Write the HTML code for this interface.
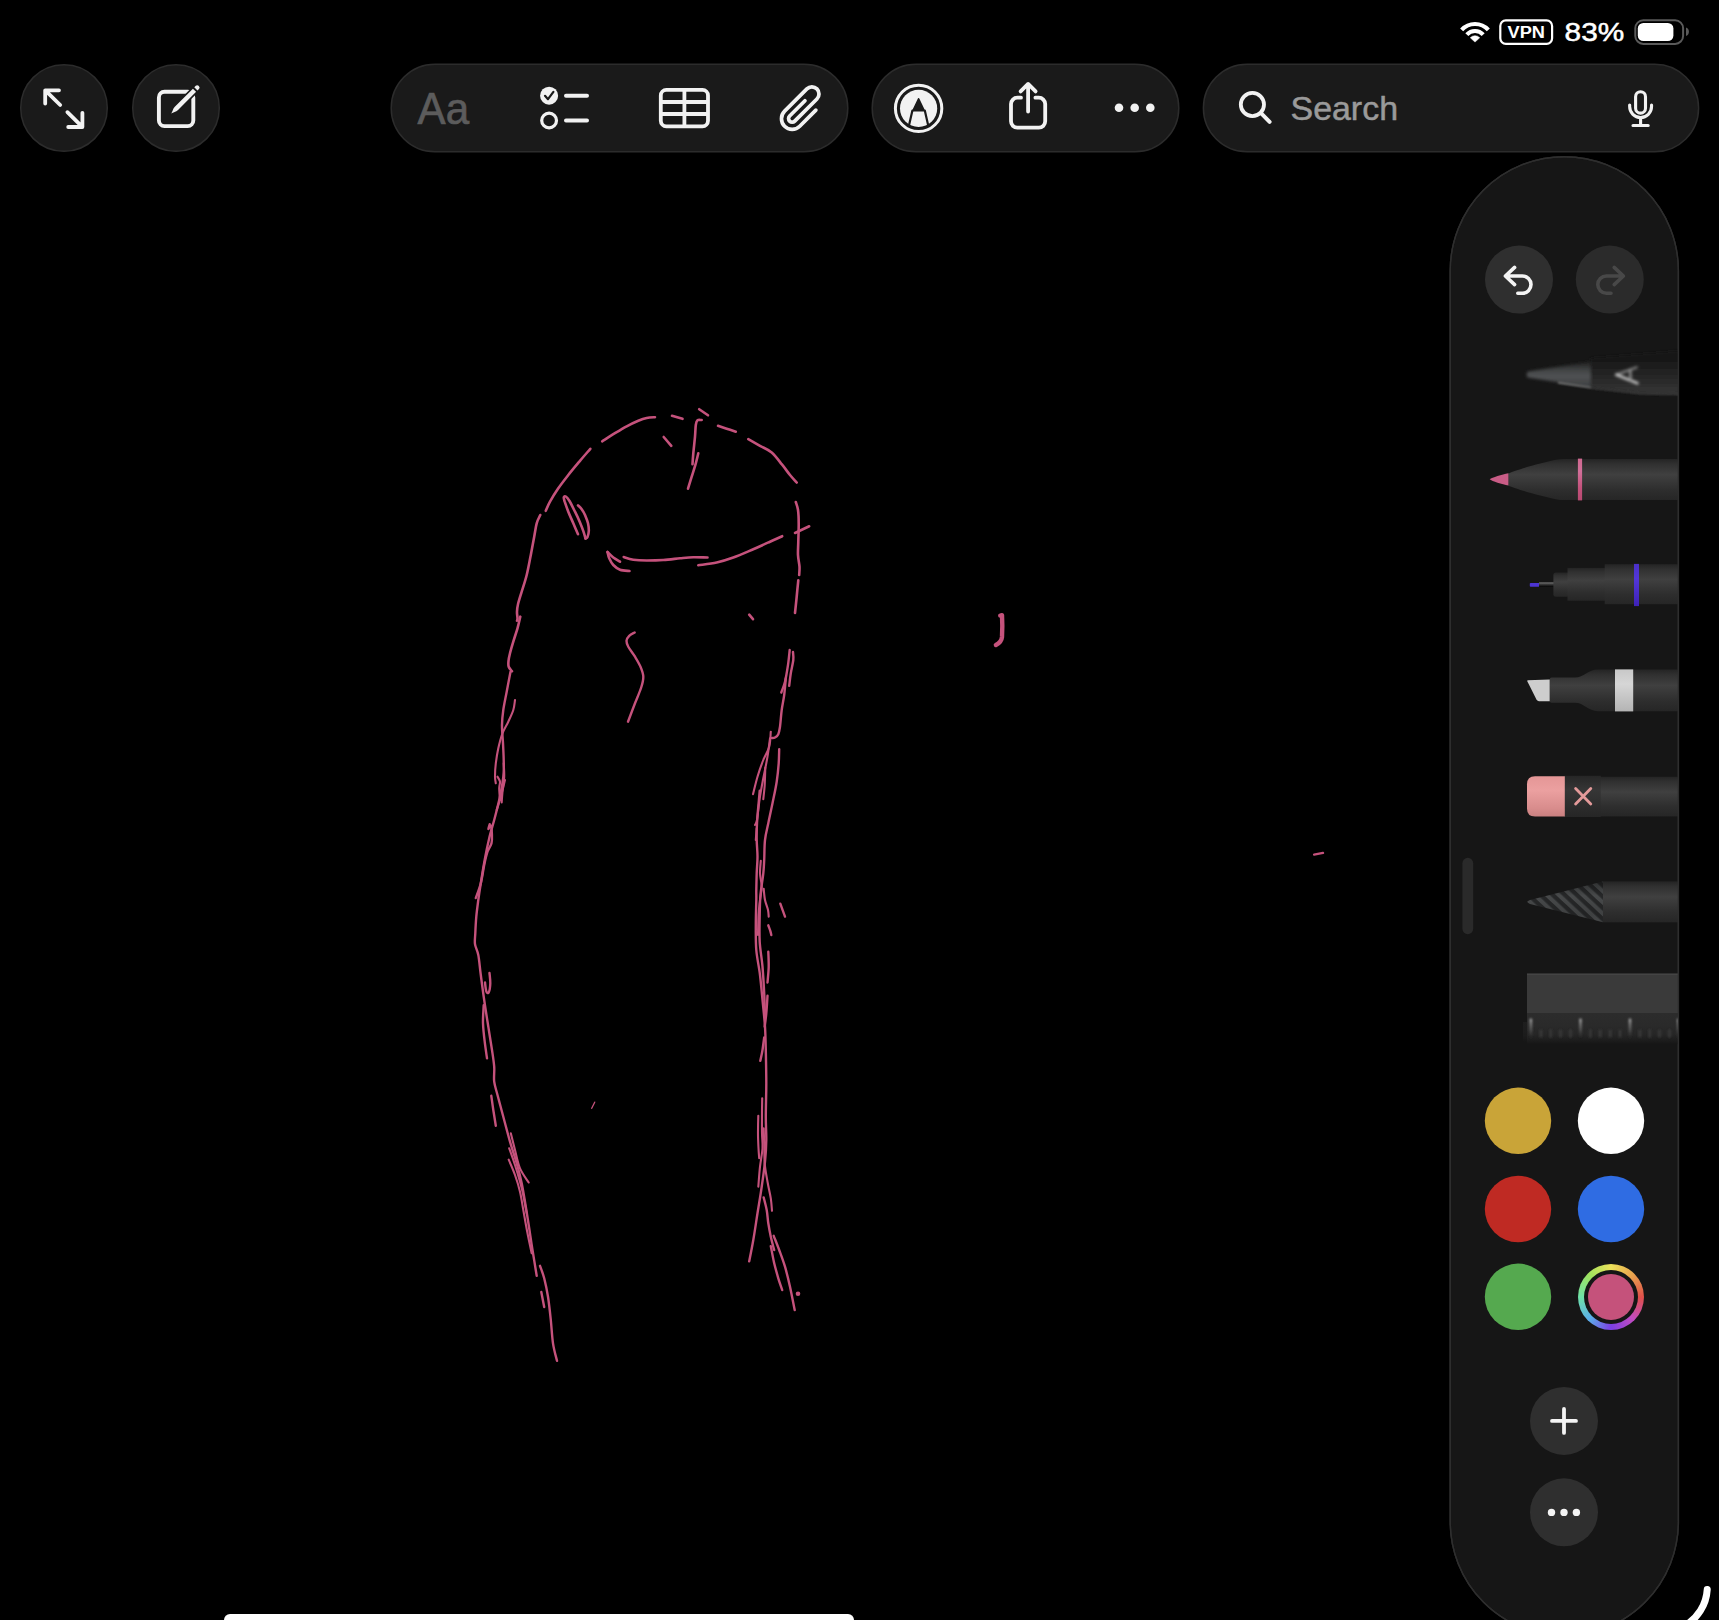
<!DOCTYPE html>
<html><head><meta charset="utf-8">
<style>
html,body{margin:0;padding:0;background:#000;}
body{width:1719px;height:1620px;overflow:hidden;position:relative;font-family:"Liberation Sans",sans-serif;}
svg{position:absolute;left:0;top:0;}
text{font-family:"Liberation Sans",sans-serif;}
#ring{position:absolute;left:1577.8px;top:1263.6px;width:66.4px;height:66.4px;border-radius:50%;
background:conic-gradient(from 0deg,#ece25a 0deg,#e9a24e 45deg,#e0504a 90deg,#c24cc0 135deg,#7c3fe4 180deg,#5bb0ea 225deg,#6fe2a8 270deg,#9ee25e 315deg,#ece25a 360deg);}
#ring:before{content:"";position:absolute;left:6.2px;top:6.2px;right:6.2px;bottom:6.2px;border-radius:50%;background:#161616;}
#ring:after{content:"";position:absolute;left:10px;top:10px;right:10px;bottom:10px;border-radius:50%;background:#c5527b;}
</style></head><body>
<svg width="1719" height="1620" viewBox="0 0 1719 1620">
<defs>
<linearGradient id="body" x1="0" y1="0" x2="0" y2="1">
<stop offset="0" stop-color="#242424"/><stop offset="0.12" stop-color="#303030"/><stop offset="0.38" stop-color="#404040"/><stop offset="0.75" stop-color="#2e2e2e"/><stop offset="1" stop-color="#262626"/>
</linearGradient>
<clipPath id="panelclip"><rect x="1450" y="156.5" width="228.5" height="1479.2" rx="114" ry="114"/></clipPath>
</defs>
<!--TOOLBAR-->
<g id="toolbar">
<!-- circle buttons -->
<circle cx="64" cy="108" r="43.3" fill="#1a1a1a" stroke="#2c2c2c" stroke-width="1.5"/>
<circle cx="176" cy="108" r="43.3" fill="#1a1a1a" stroke="#2c2c2c" stroke-width="1.5"/>
<!-- expand arrows -->
<g fill="none" stroke="#f2f2f2" stroke-width="3.8" stroke-linecap="round" stroke-linejoin="round">
<path d="M45.2 103.5 V90.3 H59 M45.8 90.9 L60.2 105"/>
<path d="M82.4 112.8 V127 H68.2 M81.8 126.4 L67.4 112.2"/>
</g>
<!-- compose -->
<rect x="158.9" y="91.8" width="34.4" height="34.3" rx="5.6" fill="none" stroke="#f2f2f2" stroke-width="3.9"/>
<g transform="translate(171.2 113.6) rotate(-45)" fill="#f2f2f2" stroke="#1a1a1a" stroke-width="3.2" paint-order="stroke" stroke-linejoin="round">
<path d="M0 0 C2.4 -0.5 4.6 -2.25 7.4 -2.25 L33 -2.25 L33 2.25 L7.4 2.25 C4.6 2.25 2.4 0.5 0 0 Z"/>
<path d="M34.9 -2.25 H37 a2 2 0 0 1 2 2 V0.25 a2 2 0 0 1 -2 2 H34.9 Z"/>
</g>
<!-- pill 1 -->
<rect x="391.2" y="64.2" width="456.6" height="87.6" rx="43.8" fill="#1a1a1a" stroke="#2c2c2c" stroke-width="1.5"/>
<text x="417.6" y="123.6" font-size="44" fill="#5c5c5c" stroke="#5c5c5c" stroke-width="0.7" textLength="51.5" lengthAdjust="spacingAndGlyphs">Aa</text>
<!-- checklist -->
<circle cx="549.1" cy="95.7" r="9" fill="#f2f2f2"/>
<path d="M545 95.8 L548 99.2 L553.4 91.8" fill="none" stroke="#1a1a1a" stroke-width="2.2" stroke-linecap="round" stroke-linejoin="round"/>
<circle cx="549.1" cy="120.5" r="7.4" fill="none" stroke="#f2f2f2" stroke-width="3.2"/>
<path d="M566 95.8 H587 M566 120.6 H587" stroke="#f2f2f2" stroke-width="4" stroke-linecap="round"/>
<!-- table -->
<g fill="none" stroke="#f2f2f2" stroke-width="3.8">
<rect x="660.8" y="89.9" width="47.2" height="36.4" rx="5.5"/>
<path d="M684.4 90 V126 M661 102 H708 M661 114 H708"/>
</g>
<!-- paperclip -->
<g transform="matrix(0.7071 -0.7071 0.7071 0.7071 783.33 112.44)">
<path d="M23.6 7 H1.9 A3.6 3.6 0 0 0 1.9 14.2 H33.3 A7.1 7.1 0 0 0 33.3 0 H1.8 A10.7 10.7 0 0 0 1.8 21.4 H24.6" fill="none" stroke="#f2f2f2" stroke-width="3.7" stroke-linecap="round" stroke-linejoin="round"/>
</g>
<!-- pill 2 -->
<rect x="872.2" y="64.2" width="306.6" height="87.6" rx="43.8" fill="#1a1a1a" stroke="#2c2c2c" stroke-width="1.5"/>
<!-- markup -->
<circle cx="918.6" cy="108.4" r="23.2" fill="none" stroke="#f2f2f2" stroke-width="3"/>
<circle cx="918.6" cy="108.4" r="18.6" fill="#f2f2f2"/>
<path d="M918.6 98.8 L913 110.6 H924.2 Z" fill="#1a1a1a" stroke="#1a1a1a" stroke-width="1.6" stroke-linejoin="round"/>
<path d="M912.4 110.5 L909.2 124.5 M924.8 110.5 L928 124.5" stroke="#1a1a1a" stroke-width="2.2" stroke-linecap="round"/>
<!-- share -->
<g fill="none" stroke="#f2f2f2" stroke-width="3.8" stroke-linecap="round" stroke-linejoin="round">
<path d="M1021 97.7 H1017.4 a6.4 6.4 0 0 0 -6.4 6.4 V121.3 a6.4 6.4 0 0 0 6.4 6.4 H1038.8 a6.4 6.4 0 0 0 6.4 -6.4 V104.1 a6.4 6.4 0 0 0 -6.4 -6.4 H1035.4"/>
<path d="M1028.1 84.4 V111.5 M1020.6 91.4 L1028.1 83.9 L1035.6 91.4"/>
</g>
<!-- dots -->
<circle cx="1119" cy="107.8" r="4.3" fill="#f2f2f2"/><circle cx="1134.7" cy="107.8" r="4.3" fill="#f2f2f2"/><circle cx="1150.3" cy="107.8" r="4.3" fill="#f2f2f2"/>
<!-- search pill -->
<rect x="1203.4" y="64.2" width="495.2" height="87.6" rx="43.8" fill="#1a1a1a" stroke="#2c2c2c" stroke-width="1.5"/>
<circle cx="1252.4" cy="104.5" r="11.6" fill="none" stroke="#f2f2f2" stroke-width="3.8"/>
<path d="M1261 113.2 L1269.6 121.8" stroke="#f2f2f2" stroke-width="4" stroke-linecap="round"/>
<text x="1290.5" y="119.7" font-size="34" fill="#9a9a9a" stroke="#9a9a9a" stroke-width="0.5" textLength="107.5" lengthAdjust="spacingAndGlyphs">Search</text>
<!-- mic -->
<rect x="1635.6" y="91.75" width="9.9" height="21.4" rx="4.95" fill="none" stroke="#f2f2f2" stroke-width="3.1"/>
<path d="M1629.65 105 v1.6 a10.95 10.95 0 0 0 21.9 0 v-1.6 M1640.6 118 V125 M1633 125.5 H1648.2" fill="none" stroke="#f2f2f2" stroke-width="3.1" stroke-linecap="round"/>
</g>
<!--STATUS-->
<g id="status">
<!-- wifi -->
<g fill="none" stroke="#fff" stroke-linecap="butt">
<path d="M1461.66 29.86 A18.1 18.1 0 0 1 1488.34 29.86" stroke-width="4.15"/>
<path d="M1466.82 34.6 A11.1 11.1 0 0 1 1483.18 34.6" stroke-width="4.07"/>
</g>
<path d="M1475 42.1 L1470.28 37.77 A6.4 6.4 0 0 1 1479.72 37.77 Z" fill="#fff" stroke="#fff" stroke-width="0.5" stroke-linejoin="round"/>
<!-- VPN -->
<rect x="1500.3" y="20.4" width="51.8" height="23.4" rx="5.5" fill="none" stroke="#fff" stroke-width="2.2"/>
<text x="1507.6" y="38.4" font-size="17.4" font-weight="bold" fill="#fff" textLength="37.4" lengthAdjust="spacingAndGlyphs">VPN</text>
<text x="1564.6" y="41" font-size="26" fill="#fff" stroke="#fff" stroke-width="0.5" textLength="59.6" lengthAdjust="spacingAndGlyphs">83%</text>
<!-- battery -->
<rect x="1635.3" y="20.3" width="47.8" height="23.6" rx="8" fill="none" stroke="#5a5a5a" stroke-width="2"/>
<rect x="1637.8" y="22.9" width="35.6" height="18.2" rx="5.6" fill="#fff"/>
<path d="M1686 27.6 c2.3 0.8 2.9 2.6 2.9 4.2 s-0.6 3.4 -2.9 4.2 Z" fill="#5a5a5a"/>
</g>
<!--PANEL-->
<g id="panel">
<defs>
<filter id="b1" x="-20%" y="-50%" width="140%" height="200%"><feGaussianBlur stdDeviation="1.1"/></filter>
<filter id="b3" filterUnits="userSpaceOnUse" x="1500" y="1000" width="200" height="60"><feGaussianBlur stdDeviation="0.9"/></filter>
<filter id="bA" filterUnits="userSpaceOnUse" x="1500" y="340" width="200" height="70"><feGaussianBlur stdDeviation="1.5"/></filter>
<filter id="b2" x="-20%" y="-50%" width="140%" height="200%"><feGaussianBlur stdDeviation="1.6"/></filter>
<linearGradient id="fadeTop" x1="0" y1="0" x2="0" y2="1"><stop offset="0" stop-color="#161616" stop-opacity="1"/><stop offset="0.45" stop-color="#161616" stop-opacity="0.55"/><stop offset="1" stop-color="#161616" stop-opacity="0"/></linearGradient>
<linearGradient id="pencilA" x1="0" y1="0" x2="0" y2="1"><stop offset="0" stop-color="#161616"/><stop offset="0.25" stop-color="#181818"/><stop offset="0.55" stop-color="#242424"/><stop offset="0.85" stop-color="#303030"/><stop offset="1" stop-color="#363636"/></linearGradient>
<linearGradient id="tipA" x1="0" y1="0" x2="0" y2="1"><stop offset="0" stop-color="#1c1c1c"/><stop offset="0.3" stop-color="#3e4041"/><stop offset="0.55" stop-color="#505254"/><stop offset="1" stop-color="#3c3e40"/></linearGradient>
<linearGradient id="pinkband" x1="0" y1="0" x2="0" y2="1"><stop offset="0" stop-color="#cf6890"/><stop offset="0.3" stop-color="#d2709a"/><stop offset="0.7" stop-color="#c4527c"/><stop offset="1" stop-color="#b84a72"/></linearGradient>
<linearGradient id="blueband" x1="0" y1="0" x2="0" y2="1"><stop offset="0" stop-color="#4a30c8"/><stop offset="0.35" stop-color="#5236d8"/><stop offset="1" stop-color="#3e22b8"/></linearGradient>
<linearGradient id="whiteband" x1="0" y1="0" x2="0" y2="1"><stop offset="0" stop-color="#c8c8c8"/><stop offset="0.35" stop-color="#d6d6d6"/><stop offset="1" stop-color="#b4b4b4"/></linearGradient>
<linearGradient id="eraser" x1="0" y1="0" x2="0" y2="1"><stop offset="0" stop-color="#e49696"/><stop offset="0.35" stop-color="#eba0a0"/><stop offset="0.8" stop-color="#d88c8c"/><stop offset="1" stop-color="#c98080"/></linearGradient>
<linearGradient id="ferrule" x1="0" y1="0" x2="0" y2="1"><stop offset="0" stop-color="#262626"/><stop offset="0.35" stop-color="#363636"/><stop offset="1" stop-color="#262626"/></linearGradient>
<linearGradient id="needle" x1="0" y1="0" x2="0" y2="1"><stop offset="0" stop-color="#7a7a7a"/><stop offset="0.5" stop-color="#333"/><stop offset="1" stop-color="#050505"/></linearGradient>
<linearGradient id="rulerfade" x1="0" y1="0" x2="0" y2="1"><stop offset="0" stop-color="#2c2c2c"/><stop offset="0.4" stop-color="#2a2a2a"/><stop offset="0.68" stop-color="#262626"/><stop offset="0.85" stop-color="#1e1e1e"/><stop offset="1" stop-color="#161616"/></linearGradient>
<linearGradient id="tick" x1="0" y1="0" x2="0" y2="1"><stop offset="0" stop-color="#b0b0b0"/><stop offset="0.25" stop-color="#7a7a7a"/><stop offset="0.6" stop-color="#4a4a4a"/><stop offset="1" stop-color="#2a2a2a" stop-opacity="0"/></linearGradient>
<pattern id="hatch" width="8.2" height="8.2" patternUnits="userSpaceOnUse" patternTransform="translate(1527.8 880) rotate(-47)"><rect width="8.2" height="8.2" fill="#262728"/><rect width="4" height="8.2" fill="#47494a"/></pattern>
<linearGradient id="hatchshade" x1="0" y1="0" x2="0" y2="1"><stop offset="0" stop-color="#000" stop-opacity="0.35"/><stop offset="0.35" stop-color="#000" stop-opacity="0"/><stop offset="0.8" stop-color="#000" stop-opacity="0.12"/><stop offset="1" stop-color="#000" stop-opacity="0.05"/></linearGradient>
</defs>
<rect x="1450.2" y="156.7" width="228.2" height="1479" rx="114" ry="114" fill="#161616" stroke="#2e2e2e" stroke-width="1.4"/>
<g clip-path="url(#panelclip)">
<!-- undo/redo -->
<circle cx="1519" cy="279.6" r="34" fill="#2f2f2f"/>
<circle cx="1609.8" cy="279.6" r="34" fill="#2b2b2b"/>
<g fill="none" stroke-width="3.6" stroke-linecap="round" stroke-linejoin="round">
<path d="M1514.6 267.4 L1505.4 276 L1514.6 284.6 M1506.4 276 H1522.4 a8.6 8.6 0 0 1 0 17.2 H1517.8" stroke="#f4f4f4"/>
<path d="M1614.2 267.4 L1623.4 276 L1614.2 284.6 M1622.4 276 H1606.4 a8.6 8.6 0 0 0 0 17.2 H1611" stroke="#484848"/>
</g>
<!-- tool A (blurred pencil) -->
<g filter="url(#bA)">
<path d="M1590.7 358 L1690 350 V394.4 L1640 393.2 L1590.7 387.8 Z" fill="url(#pencilA)"/>
<path d="M1527.6 371.6 L1590.7 361.5 V387.6 L1545 380.2 L1527.6 377.6 Q1525.6 374.6 1527.6 371.6 Z" fill="url(#tipA)"/>
</g>
<g filter="url(#b1)">
<path d="M1558 382.6 L1590.7 387.5" stroke="#9a9a9a" stroke-width="1.2" fill="none"/>
<path d="M1590.7 388 L1640 393.4 L1690 394.6" stroke="#454545" stroke-width="1.2" fill="none"/>
</g>
<g filter="url(#bA)" fill="none" stroke-linecap="round" stroke-linejoin="round"><path d="M1636.6 367.4 L1616.4 374.8" stroke="#7c7c7c" stroke-width="2.6"/><path d="M1616.4 374.8 L1637.4 383.2" stroke="#c4c4c4" stroke-width="2.8"/><path d="M1630.2 370.2 L1630.6 380.2" stroke="#909090" stroke-width="2.4"/></g>
<!-- pen -->
<path d="M1508.2 473.4 C1516 470 1540 463 1556 459.8 Q1560 458.9 1564 458.9 H1690 V500.1 H1564 Q1560 500.1 1556 499.2 C1540 496 1516 489 1508.2 485.4 Z" fill="url(#body)"/>
<path d="M1489.7 479.3 C1492 477.6 1502 474.4 1508.4 473.3 V485.5 C1502 484.6 1492 481.2 1489.7 479.3 Z" fill="#c95c86"/>
<rect x="1577.9" y="458.6" width="4.2" height="41.8" fill="url(#pinkband)"/>
<!-- fineliner -->
<rect x="1529.8" y="583" width="9.6" height="3.8" rx="0.8" fill="#4c34d2"/>
<rect x="1539" y="582.4" width="15" height="4.4" fill="url(#needle)"/>
<rect x="1553.4" y="572.6" width="16" height="24.2" rx="2.5" fill="url(#body)"/>
<rect x="1567.5" y="567.9" width="38" height="32.8" fill="url(#body)"/>
<rect x="1604.7" y="564.2" width="90" height="40" fill="url(#body)"/>
<rect x="1634" y="563.9" width="5" height="42.2" fill="url(#blueband)"/>
<!-- marker -->
<path d="M1527.6 680.3 Q1527 680.6 1527.4 681.6 L1536.6 699.8 Q1537.4 701.2 1539 701.2 H1549.8 V679.6 Z" fill="#cdcdcd"/>
<path d="M1549.8 679.4 Q1549.8 677.6 1551.6 677.6 H1575 C1584 677.6 1588 669.6 1598 669.6 H1690 V711.2 H1598 C1588 711.2 1584 702.8 1575 702.8 H1551.6 Q1549.8 702.8 1549.8 701 Z" fill="url(#body)"/>
<rect x="1615" y="669.4" width="18.2" height="42" fill="url(#whiteband)"/>
<!-- eraser -->
<rect x="1600" y="776.8" width="90" height="39.6" fill="url(#body)"/>
<rect x="1564" y="775.8" width="36.8" height="41.2" fill="url(#ferrule)"/>
<path d="M1564.8 776.2 H1535 Q1527 776.2 1527 784.2 V808.6 Q1527 816.6 1535 816.6 H1564.8 Z" fill="url(#eraser)"/>
<path d="M1575.6 788.6 L1590.8 804 M1590.8 788.6 L1575.6 804" stroke="#e39a9a" stroke-width="2.8" stroke-linecap="round"/>
<!-- hatched pencil -->
<path d="M1527 902.1 Q1527.6 900.8 1530 900 L1603 881.4 V922.3 L1530 904 Q1527.4 903.3 1527 902.1 Z" fill="url(#hatch)"/>
<path d="M1527 902.1 Q1527.6 900.8 1530 900 L1603 881.4 V922.3 L1530 904 Q1527.4 903.3 1527 902.1 Z" fill="url(#hatchshade)"/>
<rect x="1603" y="881.4" width="90" height="40.9" fill="url(#body)"/>
<!-- ruler -->
<rect x="1527" y="973.6" width="170" height="40" fill="#3a3a3a"/>
<rect x="1527" y="973.6" width="170" height="1.4" fill="#444"/>
<rect x="1527" y="1013.2" width="170" height="31" fill="url(#rulerfade)"/>
<rect x="1523" y="1022" width="4" height="20" fill="url(#rulerfade)" opacity="0.35"/>
<g filter="url(#b3)">
<rect x="1529.6" y="1018.4" width="2.6" height="21" rx="1.3" fill="url(#tick)"/>
<rect x="1579.2" y="1018.4" width="2.6" height="21" rx="1.3" fill="url(#tick)"/>
<rect x="1628.7" y="1018.4" width="2.6" height="21" rx="1.3" fill="url(#tick)"/>
<rect x="1677" y="1018.4" width="2.6" height="21" rx="1.3" fill="url(#tick)"/>
<g fill="#3a3a3a">
<rect x="1539.6" y="1029.5" width="2.4" height="8"/><rect x="1549.5" y="1029.5" width="2.4" height="8"/><rect x="1559.4" y="1029.5" width="2.4" height="8"/><rect x="1569.3" y="1029.5" width="2.4" height="8"/>
<rect x="1589.1" y="1029.5" width="2.4" height="8"/><rect x="1599" y="1029.5" width="2.4" height="8"/><rect x="1608.9" y="1029.5" width="2.4" height="8"/><rect x="1618.8" y="1029.5" width="2.4" height="8"/>
<rect x="1638.6" y="1029.5" width="2.4" height="8"/><rect x="1648.5" y="1029.5" width="2.4" height="8"/><rect x="1658.4" y="1029.5" width="2.4" height="8"/><rect x="1668.3" y="1029.5" width="2.4" height="8"/>
</g></g>
<!-- handle -->
<rect x="1462.4" y="857.8" width="10.8" height="76.4" rx="5.4" fill="#2a2a2a"/>
<!-- swatches -->
<circle cx="1518" cy="1120.8" r="33.2" fill="#c9a438"/>
<circle cx="1611" cy="1120.8" r="33.2" fill="#ffffff"/>
<circle cx="1518" cy="1209" r="33.2" fill="#bf2a23"/>
<circle cx="1611" cy="1209" r="33.2" fill="#2f6ce3"/>
<circle cx="1518" cy="1296.8" r="33.2" fill="#55a94f"/>
<!-- plus / more -->
<circle cx="1564" cy="1420.9" r="34" fill="#2f2f2f"/>
<path d="M1552 1420.9 H1576 M1564 1408.9 V1432.9" stroke="#f4f4f4" stroke-width="3.8" stroke-linecap="round"/>
<circle cx="1564" cy="1512.3" r="34" fill="#2f2f2f"/>
<circle cx="1551.5" cy="1512.4" r="3.7" fill="#f4f4f4"/><circle cx="1564" cy="1512.4" r="3.7" fill="#f4f4f4"/><circle cx="1576.4" cy="1512.4" r="3.7" fill="#f4f4f4"/>
</g>
<rect x="1450.2" y="156.7" width="228.2" height="1479" rx="114" ry="114" fill="none" stroke="#2e2e2e" stroke-width="1.4"/>
</g>
<!--SKETCH-->
<g id="sketch" fill="none" stroke="#c5527c" stroke-width="2.8" stroke-linecap="round" stroke-linejoin="round">
<path d="M655.0 417.2 C653.6 417.3 649.5 417.4 646.7 418.0 C643.9 418.6 641.6 419.4 638.3 420.8 C635.0 422.2 630.9 424.1 626.7 426.3 C622.5 428.5 617.4 431.7 613.3 434.2 C609.2 436.7 604.1 440.1 602.2 441.3" stroke-width="2.6"/>
<path d="M590.3 448.8 C588.6 450.8 583.7 456.4 580.0 460.8 C576.3 465.2 571.9 470.4 568.3 475.0 C564.7 479.6 561.3 483.9 558.3 488.3 C555.2 492.8 552.1 497.9 550.0 501.7 C547.9 505.4 546.5 509.3 545.8 510.8" stroke-width="2.6"/>
<path d="M540.3 515.0 C539.7 516.4 537.7 519.7 536.7 523.3 C535.7 526.9 535.2 531.4 534.2 536.7 C533.2 542.0 532.0 548.6 530.8 555.0 C529.5 561.4 528.2 568.9 526.7 575.0 C525.2 581.1 523.2 586.8 521.7 591.7 C520.2 596.6 518.8 600.9 518.0 604.2 C517.2 607.5 517.1 609.4 517.0 611.7 C516.9 614.1 517.5 616.8 517.5 618.3 C517.5 619.8 517.1 620.4 517.0 620.8" stroke-width="2.6"/>
<path d="M520.3 616.7 C519.8 618.6 518.7 624.1 517.5 628.3 C516.3 632.5 514.5 637.5 513.3 641.7 C512.0 645.9 510.8 650.1 510.0 653.3 C509.2 656.5 508.7 658.8 508.5 661.0 C508.3 663.2 508.1 665.0 508.7 666.7 C509.3 668.4 511.4 670.5 512.0 671.3" stroke-width="2.6"/>
<path d="M510.5 671.7 C509.9 675.0 507.9 685.3 506.7 691.7 C505.5 698.1 504.1 704.5 503.3 710.0 C502.5 715.5 502.1 719.5 502.0 725.0 C501.9 730.5 502.7 737.5 503.0 743.3 C503.3 749.1 503.6 755.2 503.7 760.0 C503.8 764.8 503.9 768.2 503.7 772.0 C503.5 775.8 503.2 778.3 502.5 783.0 C501.8 787.7 500.6 793.8 499.2 800.0 C497.8 806.2 495.9 813.6 494.2 820.0 C492.5 826.4 490.7 831.9 489.2 838.3 C487.7 844.7 486.3 851.3 485.0 858.3 C483.7 865.2 482.4 873.0 481.3 880.0 C480.2 887.0 479.1 893.9 478.3 900.0 C477.5 906.1 476.8 911.2 476.3 916.7 C475.8 922.2 475.5 928.7 475.3 933.3 C475.1 937.9 474.5 940.6 475.0 944.2 C475.5 947.8 477.3 949.9 478.3 955.0 C479.3 960.1 479.8 967.5 480.8 975.0 C481.8 982.5 482.9 991.4 484.2 1000.0 C485.4 1008.6 487.0 1018.4 488.3 1026.7 C489.6 1035.0 491.0 1043.3 492.0 1050.0 C493.0 1056.7 493.8 1061.4 494.2 1066.7 C494.6 1072.0 493.6 1077.0 494.2 1081.7 C494.8 1086.4 496.0 1089.2 497.5 1095.0 C499.0 1100.8 501.2 1108.9 503.3 1116.7 C505.4 1124.5 507.8 1133.9 510.0 1141.7 C512.2 1149.5 514.8 1156.4 516.7 1163.3 C518.7 1170.2 520.2 1176.1 521.7 1183.3 C523.2 1190.5 524.5 1199.2 525.8 1206.7 C527.0 1214.2 528.1 1221.1 529.2 1228.3 C530.3 1235.5 531.2 1242.1 532.5 1250.0 C533.8 1257.9 536.0 1271.5 536.7 1275.8" stroke-width="2.4"/>
<path d="M515.0 700.0 C514.7 701.7 514.4 706.4 513.3 710.0 C512.2 713.6 510.1 717.8 508.3 721.7 C506.5 725.6 504.2 728.9 502.5 733.3 C500.8 737.7 499.4 743.3 498.3 748.3 C497.2 753.3 496.4 758.6 495.8 763.3 C495.2 768.0 495.0 773.4 495.0 776.7 C495.0 780.0 495.7 782.2 495.8 783.3" stroke-width="2.1"/>
<path d="M503.7 763.3 C503.8 765.5 504.4 772.0 504.2 776.7 C504.0 781.4 502.9 787.4 502.5 791.7 C502.1 796.0 501.8 800.7 501.7 802.5" stroke-width="2.1"/>
<path d="M497.5 776.7 C497.9 777.5 499.7 779.8 500.0 781.7 C500.3 783.6 499.2 785.2 499.2 788.3 C499.2 791.3 499.9 798.0 500.0 800.0" stroke-width="2.1"/>
<path d="M505.0 780.0 C504.3 782.8 502.2 791.7 500.8 796.7 C499.4 801.7 497.4 807.8 496.7 810.0" stroke-width="2.1"/>
<path d="M489.7 824.2 C489.5 825.0 488.1 828.8 488.3 829.0 C488.5 829.2 490.2 824.7 490.8 825.5 C491.4 826.3 491.8 831.0 491.9 834.0 C492.0 837.0 492.2 840.3 491.5 843.3 C490.8 846.2 488.7 848.1 487.5 851.7 C486.3 855.3 485.3 859.7 484.2 865.0 C483.1 870.3 482.2 877.8 480.8 883.3 C479.4 888.8 476.6 895.5 475.8 898.0" stroke-width="2.4"/>
<path d="M672.0 415.8 L682.5 418.8" stroke-width="2.6"/>
<path d="M699.2 409.2 L708.0 415.3" stroke-width="2.6"/>
<path d="M718.0 425.8 C719.5 426.3 723.7 427.7 726.7 428.7 C729.7 429.7 734.3 431.2 735.8 431.7" stroke-width="2.6"/>
<path d="M748.3 439.2 C750.2 440.3 756.1 443.6 760.0 445.8 C763.9 448.0 768.1 449.4 771.7 452.5 C775.3 455.6 778.7 460.4 781.7 464.2 C784.8 467.9 787.5 471.9 790.0 475.0 C792.5 478.1 795.6 481.2 796.7 482.5" stroke-width="2.6"/>
<path d="M663.7 437.0 L671.3 445.8" stroke-width="2.6"/>
<path d="M701.7 420.0 C701.0 420.1 698.5 419.5 697.5 420.3 C696.5 421.1 696.2 422.3 695.8 425.0 C695.4 427.7 695.4 432.0 695.0 436.7 C694.6 441.4 693.7 448.7 693.3 453.3 C692.9 457.9 692.6 462.4 692.5 464.2" stroke-width="2.6"/>
<path d="M698.3 453.3 C697.9 455.0 696.9 459.4 695.8 463.3 C694.7 467.2 693.0 472.5 691.7 476.7 C690.4 480.9 688.6 486.7 688.0 488.7" stroke-width="2.6"/>
<path d="M795.8 502.0 C796.2 503.3 797.5 506.4 798.0 510.0 C798.5 513.5 798.7 518.0 798.7 523.3 C798.8 528.6 798.4 536.4 798.3 541.7 C798.2 547.0 797.8 550.8 798.0 555.0 C798.2 559.2 799.3 563.4 799.5 566.7 C799.7 570.0 799.2 573.6 799.2 575.0" stroke-width="2.6"/>
<path d="M795.0 533.0 L809.2 526.3" stroke-width="2.6"/>
<path d="M798.3 580.3 C798.0 583.0 797.2 591.2 796.7 596.7 C796.2 602.2 795.3 610.3 795.0 613.0" stroke-width="2.6"/>
<path d="M749.2 614.7 L753.0 619.2" stroke-width="2.6"/>
<path d="M578.0 534.2 C577.2 532.4 574.9 527.0 573.3 523.3 C571.7 519.5 569.7 515.3 568.3 511.7 C566.9 508.1 565.5 504.1 564.7 501.7 C564.0 499.3 563.6 498.2 563.8 497.3 C564.0 496.4 564.8 495.9 565.8 496.5 C566.8 497.1 568.0 498.5 569.5 501.0 C571.0 503.5 573.2 508.1 575.0 511.7 C576.8 515.3 578.6 519.2 580.0 522.5 C581.4 525.8 582.6 529.0 583.5 531.7 C584.4 534.4 585.2 537.4 585.5 538.5" stroke-width="2.6"/>
<path d="M578.0 505.3 C578.6 505.9 580.5 507.6 581.7 509.2 C582.9 510.8 584.0 512.6 585.0 515.0 C586.0 517.4 587.4 520.6 588.0 523.3 C588.6 526.0 588.9 528.7 588.8 531.0 C588.7 533.3 588.0 535.8 587.5 537.0 C587.0 538.2 585.8 538.2 585.5 538.5" stroke-width="2.6"/>
<path d="M607.5 552.0 C607.8 553.0 608.2 556.1 609.2 558.3 C610.2 560.5 611.5 563.1 613.3 565.0 C615.1 566.9 617.3 568.7 620.0 569.7 C622.7 570.7 627.9 570.8 629.5 571.0" stroke-width="2.6"/>
<path d="M607.5 552.0 C608.5 552.9 611.2 555.9 613.3 557.5 C615.4 559.1 618.9 561.0 620.0 561.7" stroke-width="2.6"/>
<path d="M623.7 557.0 C625.3 557.5 629.5 559.1 633.3 559.7 C637.1 560.3 641.7 560.5 646.7 560.5 C651.7 560.5 657.8 560.4 663.3 560.0 C668.8 559.6 675.0 558.8 680.0 558.3 C685.0 557.8 688.7 557.3 693.3 557.2 C697.9 557.1 705.1 557.5 707.5 557.5" stroke-width="2.6"/>
<path d="M698.3 565.3 C701.4 564.8 710.9 563.8 716.7 562.5 C722.5 561.2 727.2 559.7 733.3 557.5 C739.4 555.3 747.2 551.8 753.3 549.2 C759.4 546.6 765.2 543.9 770.0 541.7 C774.8 539.5 780.2 537.1 782.2 536.2" stroke-width="2.6"/>
<path d="M634.7 632.5 C633.8 633.0 630.6 634.4 629.2 635.8 C627.8 637.2 626.6 639.0 626.5 640.8 C626.4 642.6 626.9 644.1 628.3 646.7 C629.7 649.4 633.0 653.4 635.0 656.7 C637.0 660.0 639.1 663.4 640.5 666.7 C641.9 670.0 643.2 673.2 643.3 676.7 C643.4 680.2 642.6 683.1 641.2 687.5 C639.8 691.9 637.2 697.6 635.0 703.3 C632.8 709.0 629.2 718.6 628.0 721.7" stroke-width="2.4"/>
<path d="M789.7 650.0 C789.4 652.5 788.8 659.7 788.0 665.0 C787.2 670.3 786.1 677.1 785.0 681.7 C783.9 686.3 781.9 690.7 781.3 692.5" stroke-width="2.4"/>
<path d="M793.0 652.0 C793.0 653.3 793.7 656.5 793.3 660.0 C792.9 663.5 791.5 669.0 790.8 673.3 C790.1 677.6 789.5 683.7 789.2 685.8" stroke-width="2.4"/>
<path d="M785.8 678.3 C785.5 681.1 784.9 689.7 784.2 695.0 C783.5 700.3 782.4 704.7 781.7 710.0 C781.0 715.3 780.6 722.7 780.0 726.7 C779.4 730.7 779.1 732.4 778.3 734.2 C777.5 736.0 776.0 736.9 775.0 737.5 C774.0 738.1 772.5 737.9 772.0 738.0" stroke-width="2.4"/>
<path d="M770.8 731.7 C770.5 734.2 770.5 742.0 769.2 746.7 C768.0 751.4 765.2 755.0 763.3 760.0 C761.3 765.0 759.2 771.0 757.5 776.7 C755.8 782.4 753.8 791.3 753.0 794.2" stroke-width="2.1"/>
<path d="M770.0 738.3 C769.6 741.4 768.6 750.0 767.5 756.7 C766.4 763.4 764.6 771.4 763.3 778.3 C762.0 785.2 760.8 791.3 759.7 798.3 C758.7 805.2 757.8 815.5 757.0 820.0 C756.2 824.5 755.3 824.2 755.0 825.0" stroke-width="2.1"/>
<path d="M779.2 749.2 C779.1 751.6 779.1 757.9 778.7 763.3 C778.3 768.7 777.7 775.0 776.7 781.7 C775.7 788.4 773.9 796.4 772.5 803.3 C771.1 810.2 769.5 817.2 768.3 823.3 C767.0 829.4 765.7 833.9 765.0 840.0 C764.3 846.1 764.5 854.5 764.2 860.0 C763.9 865.5 763.9 867.5 763.3 873.3 C762.7 879.1 761.1 888.0 760.5 895.0 C759.9 902.0 759.8 907.2 759.7 915.0 C759.6 922.8 759.2 933.1 759.7 941.7 C760.2 950.3 761.8 958.1 762.5 966.7 C763.2 975.3 763.8 985.0 764.2 993.3 C764.6 1001.6 764.9 1012.8 765.0 1016.7" stroke-width="2.4"/>
<path d="M765.3 767.5 C765.2 770.4 765.0 779.7 764.7 785.0 C764.4 790.3 763.5 796.8 763.3 799.2" stroke-width="2.1"/>
<path d="M759.7 790.8 C759.5 793.4 758.8 801.3 758.3 806.7 C757.8 812.1 757.3 817.8 757.0 823.3 C756.7 828.8 756.6 834.4 756.7 840.0 C756.8 845.6 757.5 851.2 757.5 856.7 C757.5 862.2 756.9 867.8 756.7 873.3 C756.5 878.8 756.4 885.5 756.3 890.0 C756.2 894.5 756.4 894.2 756.3 900.0 C756.2 905.8 755.8 916.7 755.8 925.0 C755.8 933.3 755.6 941.7 756.3 950.0 C757.0 958.3 759.0 966.7 760.0 975.0 C761.0 983.3 761.7 991.4 762.5 1000.0 C763.3 1008.6 764.5 1018.4 765.0 1026.7 C765.5 1035.0 765.6 1040.6 765.8 1050.0 C766.0 1059.4 766.3 1072.2 766.3 1083.3 C766.3 1094.4 765.8 1107.2 765.8 1116.7 C765.8 1126.2 766.4 1132.5 766.3 1140.0 C766.2 1147.5 765.8 1153.9 765.0 1161.7 C764.2 1169.5 763.0 1178.1 761.7 1186.7 C760.5 1195.3 758.9 1204.4 757.5 1213.3 C756.1 1222.2 754.7 1232.0 753.3 1240.0 C751.9 1248.0 749.9 1257.8 749.2 1261.3" stroke-width="2.4"/>
<path d="M756.7 828.3 L755.8 840.0" stroke-width="2.1"/>
<path d="M760.8 860.8 C760.7 862.9 759.9 869.0 760.0 873.3 C760.1 877.6 761.7 882.2 761.7 886.7 C761.7 891.2 760.5 895.3 760.0 900.0 C759.5 904.7 758.8 909.2 758.5 915.0 C758.2 920.8 758.1 931.7 758.0 935.0" stroke-width="2.1"/>
<path d="M763.7 888.7 C763.9 890.6 764.3 896.5 765.0 900.0 C765.7 903.5 767.4 907.2 768.0 910.0 C768.6 912.8 768.6 915.6 768.7 916.7" stroke-width="2.1"/>
<path d="M768.3 925.3 C768.6 926.2 769.8 929.2 770.3 930.8 C770.8 932.4 771.1 934.3 771.3 935.0" stroke-width="2.4"/>
<path d="M780.3 903.7 L785.0 916.7" stroke-width="2.4"/>
<path d="M768.3 951.7 C768.4 954.2 768.8 961.6 768.7 966.7 C768.6 971.8 767.7 979.9 767.5 982.5" stroke-width="2.4"/>
<path d="M767.5 995.8 C767.3 998.7 766.8 1008.1 766.3 1013.3 C765.8 1018.4 765.0 1024.5 764.7 1026.7" stroke-width="2.4"/>
<path d="M764.2 1037.5 C763.9 1039.6 763.1 1046.1 762.5 1050.0 C761.9 1053.9 760.7 1059.0 760.3 1060.8" stroke-width="2.4"/>
<path d="M762.2 1098.3 C762.2 1100.8 762.0 1107.5 762.0 1113.3 C762.0 1119.1 761.9 1127.5 762.0 1133.3 C762.1 1139.1 762.8 1142.7 762.5 1148.3 C762.2 1153.9 760.7 1160.3 760.0 1166.7 C759.3 1173.1 758.6 1183.4 758.3 1186.7" stroke-width="2.1"/>
<path d="M758.3 1115.8 C758.2 1118.7 758.0 1127.9 758.0 1133.3 C758.0 1138.7 758.3 1144.1 758.5 1148.3 C758.7 1152.5 759.1 1156.6 759.2 1158.3" stroke-width="2.1"/>
<path d="M763.7 1128.3 C763.8 1130.8 764.0 1137.5 764.2 1143.3 C764.4 1149.1 764.2 1156.9 764.7 1163.3 C765.2 1169.7 766.5 1175.9 767.5 1181.7 C768.5 1187.5 770.0 1193.5 770.8 1198.3 C771.5 1203.1 771.8 1208.7 772.0 1210.8" stroke-width="2.1"/>
<path d="M763.7 1197.5 C764.2 1199.6 765.9 1205.7 766.7 1210.0 C767.5 1214.3 767.6 1218.8 768.3 1223.3 C769.0 1227.8 769.8 1232.2 770.8 1236.7 C771.8 1241.2 773.6 1247.8 774.2 1250.0" stroke-width="2.4"/>
<path d="M773.7 1235.8 C774.6 1238.2 777.3 1244.8 779.2 1250.0 C781.1 1255.2 783.2 1260.6 785.0 1266.7 C786.8 1272.8 788.4 1279.5 790.0 1286.7 C791.6 1293.9 793.9 1306.1 794.7 1310.0" stroke-width="2.4"/>
<path d="M770.8 1246.2 C771.4 1249.0 773.0 1258.0 774.2 1263.3 C775.5 1268.6 777.0 1273.8 778.3 1278.3 C779.6 1282.8 781.6 1288.0 782.2 1290.0" stroke-width="2.4"/>
<path d="M489.5 973.0 C489.6 974.7 490.4 980.0 490.3 983.3 C490.2 986.5 489.4 991.2 488.7 992.5 C488.0 993.8 486.9 993.0 486.3 991.3 C485.7 989.6 485.2 984.0 485.0 982.5" stroke-width="2.4"/>
<path d="M483.7 1005.3 C483.6 1008.3 482.8 1017.2 483.0 1023.3 C483.2 1029.4 484.0 1035.9 484.7 1041.7 C485.4 1047.5 486.6 1055.5 487.0 1058.3" stroke-width="2.4"/>
<path d="M491.3 1095.8 C491.6 1098.2 492.6 1105.0 493.3 1110.0 C494.1 1115.0 495.4 1123.2 495.8 1125.8" stroke-width="2.4"/>
<path d="M594.7 1102.2 L591.7 1108.3" stroke-width="1.3"/>
<path d="M510.8 1133.3 C511.5 1136.1 513.5 1144.2 515.0 1150.0 C516.5 1155.8 517.7 1162.9 520.0 1168.3 C522.3 1173.7 527.2 1180.1 528.7 1182.5" stroke-width="2.1"/>
<path d="M509.2 1148.3 C510.2 1151.1 513.2 1159.4 515.0 1165.0 C516.8 1170.6 518.6 1176.7 520.0 1181.7 C521.4 1186.7 522.2 1189.7 523.3 1195.0 C524.4 1200.3 526.1 1210.2 526.7 1213.3" stroke-width="2.1"/>
<path d="M508.7 1159.7 C509.8 1162.2 513.1 1169.7 515.0 1175.0 C516.9 1180.3 518.6 1185.9 520.0 1191.7 C521.4 1197.5 522.0 1203.1 523.3 1210.0 C524.5 1216.9 526.1 1226.1 527.5 1233.3 C528.9 1240.5 531.0 1250.0 531.7 1253.3" stroke-width="2.1"/>
<path d="M540.0 1265.8 C540.7 1267.9 542.9 1273.1 544.2 1278.3 C545.5 1283.5 546.9 1289.8 548.0 1296.7 C549.1 1303.7 550.0 1312.2 550.8 1320.0 C551.6 1327.8 552.0 1336.5 553.0 1343.3 C554.0 1350.1 556.3 1357.9 557.0 1360.8" stroke-width="2.4"/>
<path d="M541.3 1292.0 L544.2 1307.0" stroke-width="2.4"/>
<path d="M1314.1 854.6 L1323.0 852.9" stroke-width="2.4"/>
<path d="M1000.2 615.6 L1002 615.2 C1002.4 622 1002.4 630 1002 637 C1001.6 641 999.5 643.2 995.9 645" stroke-width="4.4"/>
<circle cx="798" cy="1293.8" r="2.3" fill="#c5527c" stroke="none"/>
</g>
<!--BOTTOM-->
<g id="bottom">
<rect x="224" y="1614" width="630" height="20" rx="6" fill="#fff"/>
<path d="M1707.23 1589.5 A44.5 44.5 0 0 1 1684.2 1626" fill="none" stroke="#fff" stroke-width="7" stroke-linecap="round"/>
</g>
</svg>
<div id="ring"></div>
</body></html>
